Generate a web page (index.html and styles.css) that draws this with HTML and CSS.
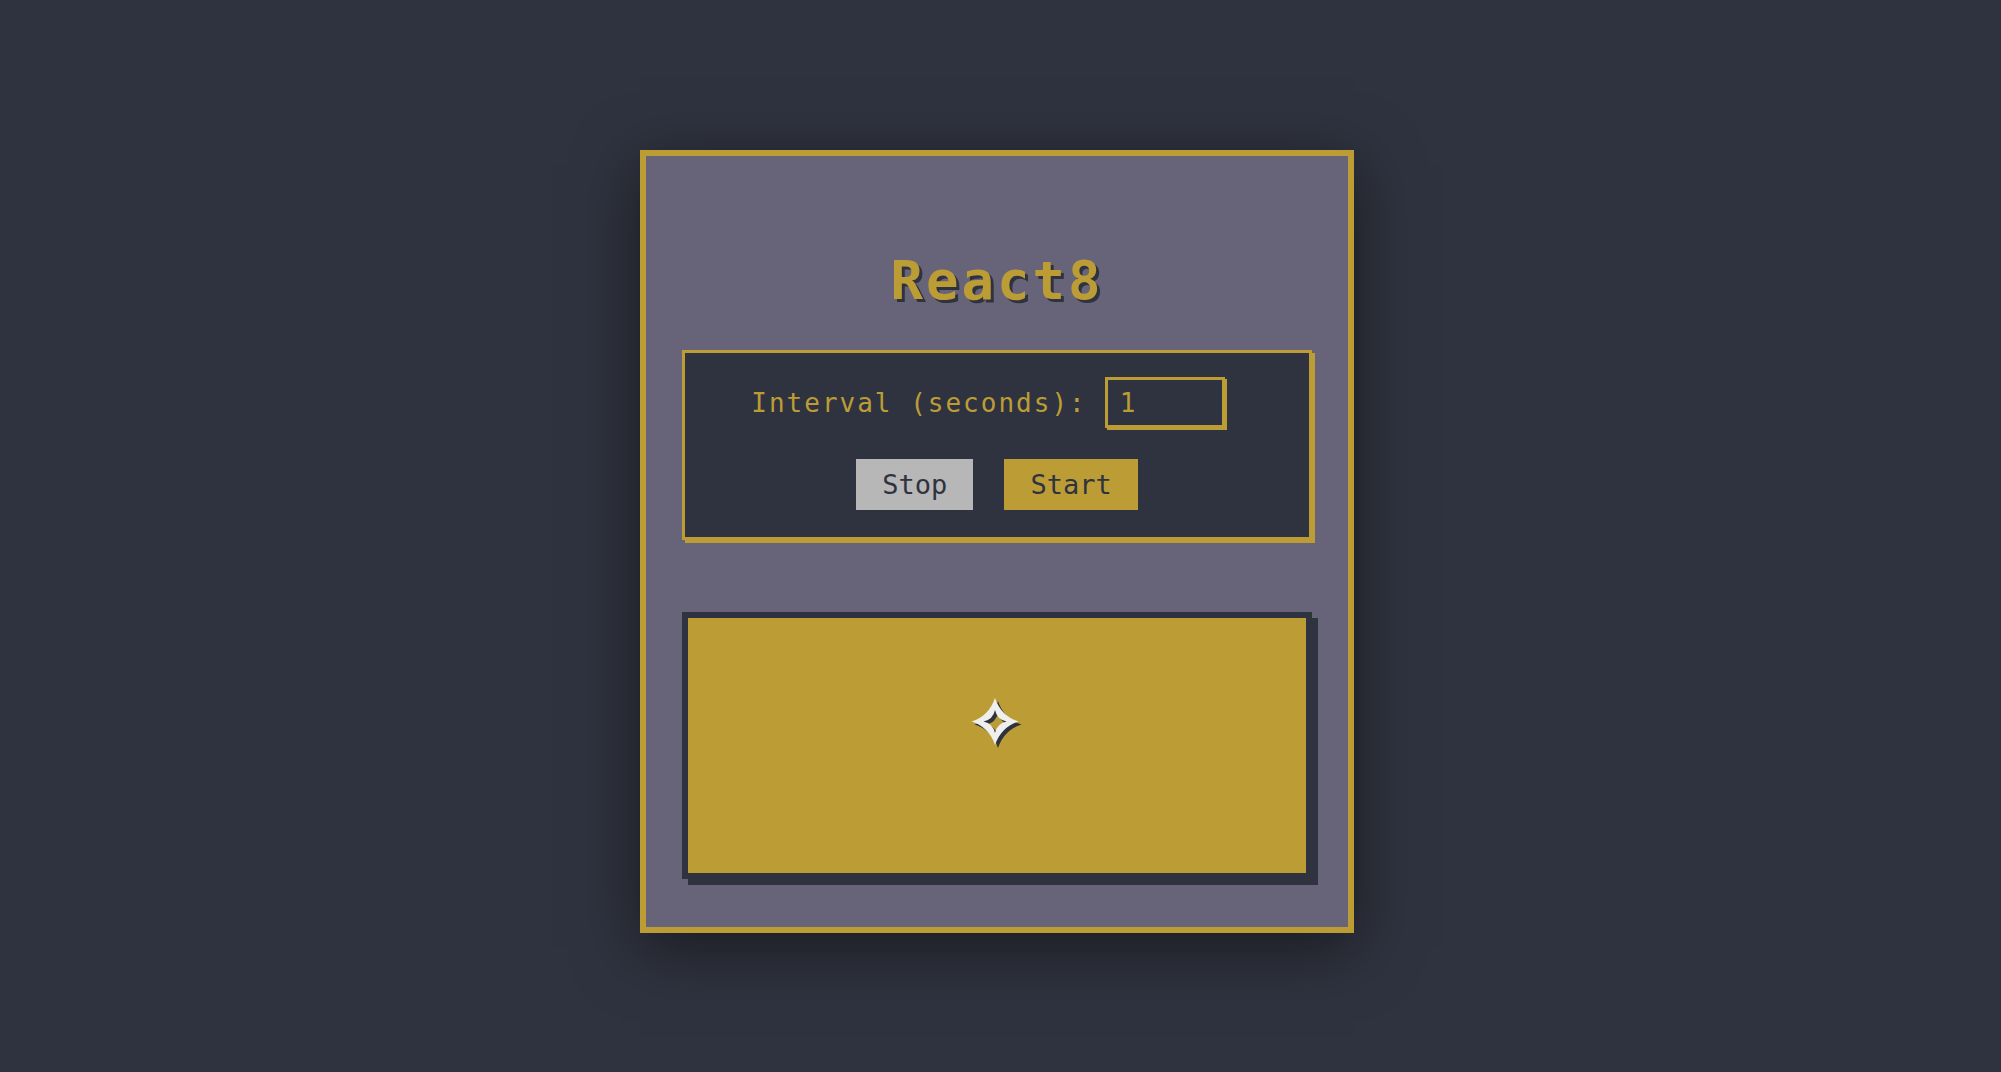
FILE: index.html
```html
<!DOCTYPE html>
<html lang="en">
<head>
<meta charset="utf-8">
<meta name="viewport" content="width=device-width, initial-scale=1">
<title>React8</title>
<link rel="stylesheet" href="styles.css">
</head>
<body>
<main class="card">
  <h1 class="title">React8</h1>
  <form class="controls">
    <div class="field">
      <label for="interval">Interval (seconds):</label>
      <input class="interval" id="interval" type="text" inputmode="numeric" value="1">
    </div>
    <div class="actions">
      <button class="button stop" type="button">Stop</button>
      <button class="button start" type="button">Start</button>
    </div>
  </form>
  <section class="display" aria-label="Current symbol">
    <svg class="star" viewBox="0 0 48 48" aria-hidden="true">
      <path fill-rule="evenodd" d="M22 0Q28 18 45.500 23.500Q28 29 22 47Q16 29 -1.500 23.500Q16 18 22 0ZM22 12Q20 21.500 10.500 23.500Q20 25.500 22 35Q24 25.500 33.500 23.500Q24 21.500 22 12Z"/>
    </svg>
  </section>
</main>
</body>
</html>
```
FILE: styles.css
```css
:root {
  --ink: #2f333f;
  --gold: #bc9d35;
  --plum: #67647a;
}

* { box-sizing: border-box; }

body {
  margin: 0;
  padding: 150px 7px 139px 0;
  min-height: 100vh;
  background: var(--ink);
  color: var(--gold);
  font-family: Consolas, "DejaVu Sans Mono", monospace;
  font-size: 26px;
}

.card {
  max-width: 714px;
  margin: 0 auto;
  padding: 88px 36px 48px;
  background: var(--plum);
  border: 6px solid var(--gold);
  box-shadow: 0 15px 60px rgba(8, 4, 4, 0.5);
}

.title {
  margin: 0 0 34px;
  font-size: 54px;
  line-height: 74px;
  height: 72px;
  letter-spacing: 3px;
  text-align: center;
  text-shadow: 3px 3px 0 var(--ink);
}

.controls {
  display: flex;
  flex-direction: column;
  gap: 31px;
  padding: 24px 18px 27px;
  background: var(--ink);
  border: 3px solid var(--gold);
  box-shadow: 3px 3px 0 var(--gold);
}

.field {
  display: flex;
  flex-wrap: wrap;
  align-items: center;
  justify-content: center;
  gap: 18px;
  padding-right: 18px;
  letter-spacing: 2px;
}

.interval {
  width: 120px;
  height: 51px;
  padding: 0 12px;
  background: var(--ink);
  border: 3px solid var(--gold);
  border-radius: 0;
  box-shadow: 2px 2px 0 var(--gold);
  color: inherit;
  font: inherit;
  outline: none;
}

.actions {
  display: flex;
  flex-wrap: wrap;
  justify-content: center;
  gap: 31px;
}

.button {
  height: 51px;
  padding: 0 26px;
  border: 0;
  color: var(--ink);
  font-family: inherit;
  font-size: 27px;
}

.stop { background: #b7b7b7; }
.start { background: var(--gold); }

.display {
  display: flex;
  justify-content: center;
  min-height: 267px;
  margin-top: 72px;
  padding-top: 80px;
  background: var(--gold);
  border: 6px solid var(--ink);
  box-shadow: 6px 6px 0 var(--ink);
}

.star {
  width: 48px;
  height: 48px;
  fill: #efefed;
  overflow: visible;
  filter: drop-shadow(3px 3px 0 var(--ink));
}
```
